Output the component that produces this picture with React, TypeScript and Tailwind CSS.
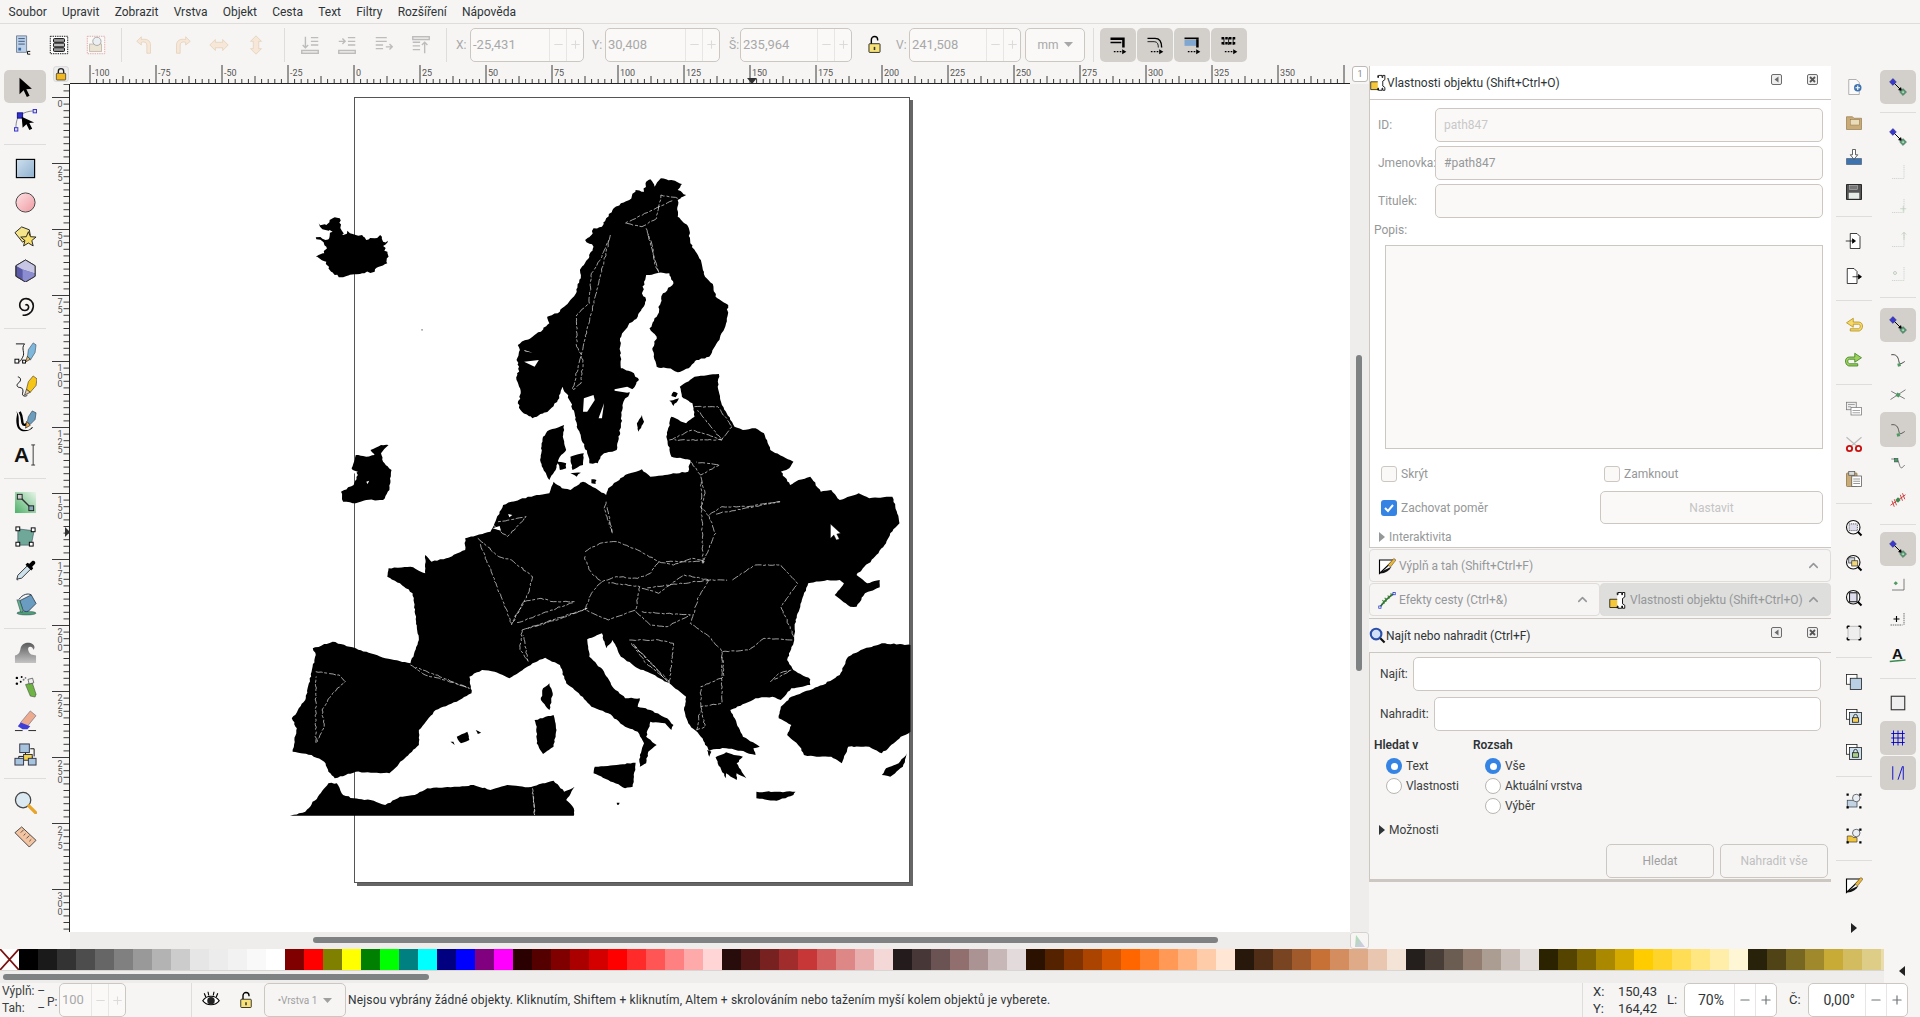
import type { ReactNode } from 'react';
import { ChevronUp, Minus, Plus } from 'lucide-react';

const FONT = "font-['Roboto','Noto_Sans',sans-serif]";

const menus = ['Soubor', 'Upravit', 'Zobrazit', 'Vrstva', 'Objekt', 'Cesta', 'Text', 'Filtry', 'Rozšíření', 'Nápověda'];

const swatches = [
  '#000000', '#1a1a1a', '#333333', '#4d4d4d', '#666666', '#808080', '#999999', '#b3b3b3', '#cccccc', '#e6e6e6', '#ececec', '#f2f2f2', '#f9f9f9', '#ffffff',
  '#800000', '#ff0000', '#808000', '#ffff00', '#008000', '#00ff00', '#008080', '#00ffff', '#000080', '#0000ff', '#800080', '#ff00ff',
  '#2b0000', '#550000', '#800000', '#aa0000', '#d40000', '#ff0000', '#ff2a2a', '#ff5555', '#ff8080', '#ffaaaa', '#ffd5d5',
  '#280b0b', '#501616', '#782121', '#a02c2c', '#c83737', '#d35f5f', '#de8787', '#e9afaf', '#f4d7d7',
  '#241c1c', '#483737', '#6c5353', '#916f6f', '#ac9393', '#c8b7b7', '#e3dbdb',
  '#2b1100', '#552200', '#803300', '#aa4400', '#d45500', '#ff6600', '#ff7f2a', '#ff9955', '#ffb380', '#ffccaa', '#ffe6d5',
  '#28170b', '#502d16', '#784421', '#a05a2c', '#c87137', '#d38d5f', '#deaa87', '#e9c6af', '#f4e3d7',
  '#241f1c', '#483e37', '#6c5d53', '#917c6f', '#ac9d93', '#c8beb7', '#e3dedb',
  '#2b2200', '#554400', '#806600', '#aa8800', '#d4aa00', '#ffcc00', '#ffd42a', '#ffdd55', '#ffe680', '#ffeeaa', '#fff6d5',
  '#28220b', '#504416', '#786721', '#a0892c', '#c8ab37', '#d3bc5f', '#decd87', '#e9ddaf',
];

// map outlines, traced in the crop's coordinates and scaled back by the group transform
const mainland =
  '950,680 985,650 1043,642 1040,680 1050,735 1080,800 1100,810 1130,805 1150,820 1165,870 1220,905 1210,925 1190,935 1212,975 1232,960 1260,950 1285,995 1310,990 1330,1020 1375,1000 1400,1015 1455,1010 1462,1040 1472,1090 1450,1120 1440,1150 1410,1195 1385,1225 1370,1245 1395,1270 1425,1260 1425,1282 1390,1300 1370,1340 1355,1340 1318,1305 1340,1270 1330,1260 1300,1260 1255,1270 1240,1320 1225,1380 1222,1440 1205,1500 1220,1530 1260,1558 1260,1575 1215,1585 1190,1620 1170,1610 1130,1615 1070,1650 1085,1690 1100,1730 1140,1760 1125,1765 1130,1785 1095,1772 1060,1765 1030,1768 1020,1772 1000,1730 970,1690 960,1650 965,1610 925,1570 880,1540 850,1525 810,1490 790,1440 775,1465 765,1420 730,1438 735,1490 770,1535 790,1580 820,1615 855,1615 850,1640 880,1650 920,1675 935,1695 930,1710 915,1690 880,1685 870,1730 895,1755 875,1775 870,1810 855,1820 855,1785 865,1750 850,1715 820,1700 780,1660 740,1640 710,1600 680,1570 665,1515 630,1493 600,1510 570,1535 545,1555 510,1535 480,1530 450,1550 455,1600 420,1625 370,1650 330,1710 330,1755 300,1790 260,1840 180,1835 130,1855 115,1835 105,1805 75,1785 30,1775 40,1705 28,1675 60,1620 75,1535 85,1485 78,1465 125,1445 180,1465 250,1495 310,1510 330,1440 315,1300 285,1270 255,1250 258,1225 310,1220 345,1240 345,1185 360,1205 395,1195 440,1170 440,1135 500,1115 530,1035 550,1025 610,1005 640,1000 650,965 670,985 690,990 720,965 750,985 775,1005 780,985 820,945 860,928 880,950 970,935 975,900 930,890 918,830 930,770 965,790 985,770 980,730 955,710';

const scandinavia =
  '565,730 572,700 562,660 568,620 562,600 570,570 565,555 600,530 620,515 640,490 635,470 660,460 680,435 690,420 705,395 715,345 715,325 735,290 745,260 725,240 740,225 745,205 765,200 775,175 790,150 810,130 830,120 845,90 865,95 870,65 880,58 890,80 905,55 930,60 955,72 945,90 965,105 945,120 945,170 970,200 975,250 1000,300 1010,350 1030,380 1035,410 1065,435 1060,490 1040,545 1020,590 990,600 975,620 945,637 920,625 895,620 885,570 895,530 878,505 895,470 910,400 935,370 925,340 895,340 870,345 860,400 870,420 850,470 830,490 820,510 808,535 810,580 810,625 835,635 853,660 835,690 815,730 810,790 800,870 770,880 755,910 735,910 730,880 705,800 700,760 690,725 680,700 672,680 660,720 640,750 600,775 575,755';

const islands = [
  '85,232 108,240 128,232 135,222 150,225 160,212 180,225 195,225 205,240 225,235 238,225 245,245 256,242 245,258 258,290 255,310 235,320 225,335 190,342 150,352 130,345 115,325 110,305 85,290 105,280 110,260',
  '92,190 110,195 118,180 130,172 142,175 147,212 150,240 120,250 118,228 125,215 108,210 95,200',
  '180,885 205,890 225,885 215,870 240,855 258,855 240,880 245,905 265,930 260,990 245,1020 205,1020 180,1030 150,1025 145,995 175,975 185,945 170,925',
  '675,795 672,830 680,870 665,890 655,930 640,960 625,925 618,900 625,830 640,810',
  '660,905 680,910 680,925 665,930',
  '690,890 722,880 720,915 695,930',
  '690,940 715,938 705,950',
  '935,695 945,700 940,712 930,708',
  '925,722 948,715 935,738',
  '860,765 865,785 852,815 848,790',
  '740,958 752,960 750,972 740,970',
  // turkey
  '1500,1455 1430,1450 1380,1470 1350,1490 1330,1545 1290,1575 1215,1610 1190,1640 1185,1675 1215,1695 1205,1725 1235,1760 1245,1785 1275,1790 1310,1790 1335,1810 1350,1760 1400,1760 1430,1780 1475,1730 1500,1715',
  // north africa
  '18,1970 60,1955 90,1910 115,1870 135,1870 150,1905 175,1915 215,1920 250,1935 285,1910 320,1905 350,1885 420,1880 460,1875 500,1890 540,1875 590,1882 650,1862 675,1895 700,1880 680,1920 698,1945 698,1970',
  // mediterranean islands and peloponnese
  '640,1570 648,1600 640,1650 620,1620 625,1585',
  '605,1680 650,1665 657,1710 650,1760 625,1782 610,1750 610,1700',
  '748,1820 800,1815 845,1808 838,1880 820,1885 780,1860 745,1840',
  '1132,1895 1225,1895 1220,1905 1180,1922 1132,1915',
  '1490,1780 1480,1820 1450,1850 1430,1845 1440,1825 1470,1810',
  '420,1730 445,1715 450,1740 430,1750',
  '465,1710 478,1718 470,1722',
  '405,1745 412,1745 415,1755',
  '1015,1770 1025,1775 1020,1790',
  '1035,1792 1060,1777 1100,1790 1085,1810 1108,1855 1085,1840 1085,1860 1060,1840 1060,1855 1040,1810',
];

const whiteCuts = [
  '720,755 722,715 745,705 748,720 730,755',
  '757,775 770,730 765,775',
  '795,688 825,680 845,692 825,698 795,692',
  '580,570 600,578 582,574',
  '580,605 615,600 605,620',
  '542,1062 552,1065 545,1072',
  '205,965 212,962 208,972',
  '172,930 185,935 178,942',
  '505,1105 522,1098 525,1112',
  '325,1205 338,1208 335,1218',
  '1095,1670 1105,1660 1110,1670',
];

const borders = [
  '945,115 905,105 895,175 860,200 820,190',
  '870,205 885,260 890,310 900,338',
  '785,225 765,290 740,340 735,430 705,465 705,560 720,600 715,670 695,690',
  '775,1025 770,1045 790,1120',
  '1000,950 1010,1000 1000,1040 1020,1070 1035,1120 1020,1165 1005,1210',
  '1020,1065 1050,1040 1110,1040 1190,1025',
  '985,740 1040,740 1075,800 1050,840',
  '925,840 980,810 1050,840',
  '975,905 1000,945 1045,915',
  '725,1175 760,1150 800,1145 850,1170 900,1205 880,1240 850,1255 800,1250 765,1265 740,1240 725,1200',
  '900,1205 935,1215 980,1195 1010,1205',
  '860,1285 900,1300 960,1245 1020,1260',
  '765,1265 740,1300 725,1350 780,1380 845,1350 855,1280',
  '1075,1260 1130,1215 1190,1215 1230,1270 1190,1340 1225,1440 1150,1435 1115,1470 1050,1475 1020,1430 975,1390 995,1310 1020,1260',
  '845,1355 880,1395 920,1400 975,1365',
  '85,1535 140,1545 155,1565 125,1600 100,1650 105,1700 85,1750',
  '310,1515 345,1545 390,1560 450,1585',
  '470,1135 520,1190 550,1200 600,1250 590,1300 550,1390',
  '550,1395 580,1325 620,1315 650,1325 700,1325',
  '575,1410 630,1390 680,1370 730,1345',
  '575,1410 570,1470 590,1505',
  '830,1440 900,1440 935,1450 925,1570',
  '1050,1475 1055,1550 1000,1580 1000,1640 1050,1630 1050,1560',
  '1165,1565 1185,1540 1215,1530',
  '1000,1640 1010,1700 990,1710',
  '500,1090 540,1130 585,1070',
  '600,1885 605,1965',
  '835,1450 870,1510 925,1565',
];

// breaks the straight traced edges up so the coast reads as a coast
function roughen(points: string, amp: number, seed = 1) {
  const pts = points.split(' ').map((p) => p.split(',').map(Number));
  const out: string[] = [];
  let n = seed;
  const noise = () => {
    n += 1;
    const v = Math.sin(n * 12.9898) * 43758.5453;
    return v - Math.floor(v) - 0.5;
  };
  pts.forEach((a, i) => {
    const b = pts[(i + 1) % pts.length];
    const len = Math.hypot(b[0] - a[0], b[1] - a[1]);
    const steps = Math.max(1, Math.round(len / 7));
    for (let s = 0; s < steps; s++) {
      const t = s / steps;
      const x = a[0] + (b[0] - a[0]) * t + (s ? noise() * amp : 0);
      const y = a[1] + (b[1] - a[1]) * t + (s ? noise() * amp : 0);
      out.push(`${Math.min(x, 1498).toFixed(1)},${Math.min(y, 1967).toFixed(1)}`);
    }
  });
  return out.join(' ');
}

function Icon({ s = 22, children }: { s?: number; children: ReactNode }) {
  return (
    <svg width={s} height={s} viewBox="0 0 24 24" className="shrink-0">
      {children}
    </svg>
  );
}

// left toolbox
const toolIcons: Record<string, ReactNode> = {
  select: <path d="M6 2v18l4.500-4.500 3.500 7.500 3-1.500-3.500-7 6-.5z" fill="#000" />,
  node: (
    <>
      <path d="M2 20C2 12 4 8 7 6 10 4 15 2 21 2" fill="none" stroke="#667" strokeWidth=".8" />
      <rect x="0.500" y="19.500" width="3.500" height="3.500" fill="#dde" stroke="#33c" />
      <rect x="20" y="0.500" width="3.500" height="3.500" fill="#dde" stroke="#33c" />
      <rect x="3.500" y="4" width="5.500" height="5.500" fill="#33c" stroke="#118" />
      <path d="M8 8l13 6-5 .5 3 6-3 1.500-3-6-4 3.500z" fill="#000" />
    </>
  ),
  rect: (
    <>
      <defs>
        <linearGradient id="rectG" x1="0" y1="0" x2="1" y2="1">
          <stop offset="0" stopColor="#cfe0ef" />
          <stop offset="1" stopColor="#8eb0cf" />
        </linearGradient>
      </defs>
      <rect x="2.500" y="2.500" width="19" height="19" fill="url(#rectG)" stroke="#000" strokeWidth="1.200" />
    </>
  ),
  circle: (
    <>
      <defs>
        <linearGradient id="circG" x1="0" y1="0" x2="1" y2="1">
          <stop offset="0" stopColor="#ffe2e4" />
          <stop offset="1" stopColor="#ee9aa2" />
        </linearGradient>
      </defs>
      <circle cx="12" cy="12" r="10" fill="url(#circG)" stroke="#444" strokeWidth="1" />
    </>
  ),
  star: (
    <>
      <path d="M1 8l7-6 8 3 1 6-8 7z" fill="#f5e58a" stroke="#222" />
      <path d="M15 7l2.200 5.200 5.800.4-4.400 3.600 1.400 5.600-5-3-5 3 1.400-5.600L7 12.600l5.800-.4z" fill="#f7df6a" stroke="#222" />
    </>
  ),
  box: (
    <>
      <path d="M12 1l10 6v11l-10 6-10-6V7z" fill="#5a5aa8" stroke="#333" />
      <path d="M12 1l10 6v8L9 11 2 7z" fill="#c6c6e4" />
      <path d="M9 11l13 4v3l-10 6-3-2z" fill="#8c8cd0" />
      <path d="M12 1l10 6v11l-10 6-10-6V7z" fill="none" stroke="#333" />
    </>
  ),
  spiral: <path d="M12 13c1-2 4 0 3 3s-6 3-8 0-1-9 4-10 10 3 9 9-7 9-11 8" fill="none" stroke="#111" strokeWidth="1.700" />,
  pen: (
    <>
      <path d="M2 3h9C7 8 12 12 9 17s-2 4-4 4" fill="none" stroke="#111" />
      <rect x="1" y="19" width="4" height="4" fill="#fff" stroke="#000" />
      <rect x="9" y="20" width="3" height="3" fill="#fff" stroke="#000" />
      <path d="M15 9l5-7 3 2-1 8-5 8-3-3z" fill="#7db8dc" stroke="#345" strokeWidth=".6" />
      <path d="M14 16l3 3-5 3z" fill="#e8b86a" stroke="#222" strokeWidth=".7" />
    </>
  ),
  pencil: (
    <>
      <path d="M4 2c3 0 4 4 1 6s-2 5 1 5 4 3 3 6 3 4 5 2" fill="none" stroke="#111" />
      <path d="M15 7l5-6 4 3-1 7-6 7-4-3z" fill="#f5c518" stroke="#543" strokeWidth=".7" />
      <path d="M13 15l4 3-6 3z" fill="#e9cfa6" stroke="#222" strokeWidth=".7" />
    </>
  ),
  calli: (
    <>
      <path d="M2 2c3 3 3 6 3 10s0 10 7 10 4-3 8-3c-4 5-15 7-17-2S5 6 2 2z" fill="#000" />
      <path d="M6 3c3 5 2 9 3 12s4 1 5 0" fill="none" stroke="#000" strokeWidth="2.500" />
      <path d="M15 8l4-6 4 2-1 7-5 5-3-3z" fill="#6d9dbd" stroke="#234" strokeWidth=".6" />
      <path d="M13 13l4 4-5 3z" fill="#eaa94a" stroke="#222" strokeWidth=".7" />
    </>
  ),
  text: (
    <>
      <text x="0" y="20" fontSize="22" fontWeight="900" fontFamily="Liberation Sans, sans-serif" fill="#111">
        A
      </text>
      <path d="M20 2v21M18 2h4M18 23h4" stroke="#222" strokeWidth=".9" fill="none" />
    </>
  ),
  gradient: (
    <>
      <defs>
        <linearGradient id="gradG" x1="0" y1="1" x2="1" y2="0">
          <stop offset="0" stopColor="#4fb069" />
          <stop offset="1" stopColor="#e8f5ea" />
        </linearGradient>
      </defs>
      <rect x="1" y="1" width="22" height="22" fill="url(#gradG)" />
      <path d="M6 6l12 12" stroke="#333" strokeWidth="1.400" />
      <rect x="3.500" y="3.500" width="5" height="5" fill="#ccc" stroke="#222" />
      <rect x="15.500" y="15.500" width="5" height="5" fill="#8ab" stroke="#222" />
    </>
  ),
  mesh: (
    <>
      <path d="M4 4l17 2-3 15-14 0z" fill="#6fa799" />
      <path d="M4 4l17 2-3 15-14 0z" fill="none" stroke="#234" strokeWidth=".5" />
      <rect x="2" y="2" width="4" height="4" fill="#fff" stroke="#000" />
      <rect x="18" y="3" width="4" height="4" fill="#fff" stroke="#000" />
      <rect x="2" y="18" width="4" height="4" fill="#fff" stroke="#000" />
      <rect x="16" y="18" width="4" height="4" fill="#fff" stroke="#000" />
    </>
  ),
  dropper: (
    <>
      <path d="M3 21l1-4L14 7l4 3L8 20z" fill="#cfe3ee" stroke="#333" />
      <path d="M14 4l2 1 3-3c2-1 4 1 3 3l-3 3 1 2-2 2-6-6z" fill="#000" />
      <path d="M3.500 19l-1 3 2 .5z" fill="#556" />
    </>
  ),
  bucket: (
    <>
      <ellipse cx="13" cy="21" rx="10" ry="2" fill="#4f9c78" stroke="#234" strokeWidth=".4" />
      <path d="M6 8l12-6 5 9-8 8c-3 1-5 0-6-2z" fill="#6a9cc2" stroke="#234" strokeWidth=".8" />
      <path d="M3 7l3 1 3 9 0 3-2 0z" fill="#64b28a" stroke="#234" strokeWidth=".5" />
      <path d="M5 7C9 1 15 0 18 2" fill="none" stroke="#234" />
    </>
  ),
  tweak: (
    <>
      <defs>
        <linearGradient id="twkG" x1="0" y1="0" x2="0" y2="1">
          <stop offset="0" stopColor="#5a5a5a" />
          <stop offset="1" stopColor="#c4c4c4" />
        </linearGradient>
      </defs>
      <path d="M1 23v-8c5-1 5-4 6-8s6-6 10-5 6 5 3 7c0-3-4-4-5-2s1 6 3 7l5 1v8z" fill="url(#twkG)" />
    </>
  ),
  spray: (
    <>
      <path d="M12 10l7-2 4 12-1 3-5-1z" fill="#6fb344" stroke="#333" strokeWidth=".5" />
      <rect x="15" y="4" width="5" height="5" transform="rotate(-15 17 6)" fill="#eee" stroke="#333" strokeWidth=".6" />
      <circle cx="3" cy="3" r="1.300" />
      <circle cx="8" cy="2" r="1" />
      <circle cx="3" cy="9" r="1.300" />
      <circle cx="7" cy="7" r="1" />
      <circle cx="10" cy="5" r="1" fill="#777" />
      <circle cx="12" cy="3" r=".9" fill="#777" />
    </>
  ),
  eraser: (
    <>
      <path d="M7 14L17 2l6 5-9 11-4-1z" fill="#ecaa8e" stroke="#4b4b66" strokeWidth=".5" />
      <path d="M7 14l10 4-3 3H9l-5-3z" fill="#3f3fd8" />
      <path d="M1 22.500h8M15 22.500h8" stroke="#222" strokeWidth="1" />
    </>
  ),
  connector: (
    <>
      <path d="M12 8V17M5 18v-4h14v4M17 6h4v8" fill="none" stroke="#111" strokeWidth="1" />
      <rect x="6" y="1" width="10" height="9" fill="#a7c4de" stroke="#334" />
      <rect x="10" y="12" width="9" height="6" fill="#f5d24c" stroke="#334" />
      <rect x="1" y="16" width="9" height="7" fill="#a7c4de" stroke="#334" />
      <rect x="15" y="16" width="8" height="7" fill="#a7c4de" stroke="#334" />
    </>
  ),
  zoom: (
    <>
      <circle cx="9.500" cy="9.500" r="8" fill="#dbe9f2" stroke="#444" strokeWidth="1.300" />
      <path d="M15.500 15.500l7 7" stroke="#e9a529" strokeWidth="3.500" strokeLinecap="round" />
    </>
  ),
  measure: (
    <>
      <path d="M8 2l15 14-7 7L1 8z" fill="#f2c4a2" stroke="#222" strokeWidth=".8" />
      <path d="M7 8l3-3M10 11l2-2M13 14l3-3M16 17l2-2" stroke="#333" strokeWidth=".8" />
    </>
  ),
};

const toolRows = [
  ['select', 'node'],
  ['rect', 'circle', 'star', 'box', 'spiral'],
  ['pen', 'pencil', 'calli', 'text'],
  ['gradient', 'mesh', 'dropper', 'bucket'],
  ['tweak', 'spray', 'eraser', 'connector'],
  ['zoom', 'measure'],
];

function LeftToolbox() {
  return (
    <div className="w-[50px] shrink-0 flex flex-col items-center pt-[5px]">
      {toolRows.map((group, g) => (
        <div key={g} className="w-[42px] flex flex-col">
          {g > 0 && (
            <div className="h-[14px] flex items-center">
              <div className="w-full h-px bg-[#dedddb]" />
            </div>
          )}
          {group.map((name) => (
            <div
              key={name}
              className={`flex items-center justify-center rounded-[5px] ${name === 'select' ? 'h-[33px] bg-[#d3d0cc]' : 'h-[34px]'}`}
            >
              <Icon s={name === 'select' ? 22 : 23}>{toolIcons[name]}</Icon>
            </div>
          ))}
        </div>
      ))}
    </div>
  );
}

// rulers
function HRuler() {
  const ticks = [];
  for (let i = -40; i <= 150; i++) {
    const x = 354 + i * 6.6;
    if (x < 70 || x > 1350) continue;
    const major = i % 10 === 0;
    const mid = i % 5 === 0;
    ticks.push(<line key={i} x1={x} x2={x} y1={major ? 65 : mid ? 76 : 79} y2={83} stroke="#3a3a3a" strokeWidth="1" />);
    if (major && x < 1330)
      ticks.push(
        <text key={`t${i}`} x={x + 2} y={76} fontSize="9" fill="#555" fontFamily="Roboto, sans-serif">
          {i * 2.5}
        </text>,
      );
  }
  return (
    <svg width="1280" height="19" viewBox="70 65 1280 19" className="shrink-0">
      {ticks}
      <line x1="70" x2="1350" y1="83.500" y2="83.500" stroke="#222" />
      <path d="M747 78h10l-5 6z" fill="#333" />
    </svg>
  );
}

function VRuler() {
  const ticks = [];
  for (let i = -2; i <= 130; i++) {
    const y = 97.5 + i * 6.6;
    if (y < 84 || y > 932) continue;
    const major = i % 10 === 0;
    ticks.push(<line key={i} x1={major ? 52 : 63.5} x2={70} y1={y} y2={y} stroke="#3a3a3a" strokeWidth="1" />);
    if (major)
      String(i * 2.5)
        .split('')
        .forEach((d, n) => {
          ticks.push(
            <text key={`t${i}-${n}`} x={57.5} y={y + 9 + n * 8} fontSize="9" fill="#555" fontFamily="Roboto, sans-serif">
              {d}
            </text>,
          );
        });
  }
  return (
    <svg width="20" height="848" viewBox="50 84 20 848" className="shrink-0">
      {ticks}
      <line x1="69.500" x2="69.500" y1="84" y2="932" stroke="#222" />
      <path d="M65 527v10l5-5z" fill="#333" />
    </svg>
  );
}

function EuropeCanvas() {
  return (
    <div className="w-[1280px] h-[848px] bg-white shrink-0">
      <svg width="1280" height="848" viewBox="70 84 1280 848" className="block">
        {/* page with its shadow */}
        <rect x="357" y="100" width="556" height="786" fill="#666" />
        <rect x="354.500" y="97.500" width="555" height="785" fill="#fff" stroke="#555" />
        <g transform="translate(280 160) scale(0.42085 0.33333)">
          <polygon points={roughen(mainland, 3, 3)} fill="#000" />
          <polygon points={roughen(scandinavia, 5, 7)} fill="#000" />
          {islands.map((p, i) => (
            <polygon key={i} points={roughen(p, i < 2 ? 8 : 3, i * 11)} fill="#000" />
          ))}
          {whiteCuts.map((p, i) => (
            <polygon key={i} points={p} fill="#fff" />
          ))}
          {borders.map((p, i) => (
            <polyline
              key={i}
              points={roughen(p, 3, i * 5).split(' ').slice(0, -1).join(' ')}
              fill="none"
              stroke="#fff"
              strokeWidth="0.7"
              strokeDasharray="7 1.500 3 2"
              opacity="0.9"
              vectorEffect="non-scaling-stroke"
            />
          ))}
          <rect x="336" y="507" width="3" height="5" fill="#888" />
          <polygon points="800,1928 807,1928 805,1934 801,1934" fill="#000" />
          <polygon
            points="1308,1092 1308,1135 1316,1125 1322,1140 1329,1137 1323,1122 1332,1120"
            fill="#fff"
            stroke="#000"
            strokeWidth="1"
          />
        </g>
      </svg>
    </div>
  );
}

// form bits
function Spin({
  w,
  value,
  dim = true,
  big = false,
}: {
  w: string;
  value: string;
  dim?: boolean;
  big?: boolean;
}) {
  const btn = big ? 'w-[21px]' : 'w-[17px]';
  return (
    <div className={`${w} h-[34px] shrink-0 flex items-center rounded-[5px] border border-[#cdc7c2] ${dim ? 'bg-[#faf9f8]' : 'bg-white'}`}>
      <span className={`flex-1 ${big ? 'text-[14px] text-right pr-[10px]' : 'text-[13px] pl-[2px]'} ${dim ? 'text-[#a8a8a8]' : 'text-[#2e3436]'}`}>
        {value}
      </span>
      <span className={`${btn} h-full border-l border-[#e8e6e4] flex items-center justify-center`}>
        <Minus size={big ? 14 : 13} strokeWidth={2} className={dim ? 'text-[#dcdbd9]' : 'text-[#6f7476]'} />
      </span>
      <span className={`${btn} h-full border-l border-[#e8e6e4] flex items-center justify-center`}>
        <Plus size={big ? 14 : 13} strokeWidth={2} className={dim ? 'text-[#dcdbd9]' : 'text-[#6f7476]'} />
      </span>
    </div>
  );
}

function Field({ label, value, muted }: { label: string; value?: string; muted?: boolean }) {
  return (
    <div className="flex items-center h-[34px]">
      <span className="w-[57px] shrink-0 text-[12px] text-[#959898]">{label}</span>
      <div className="flex-1 h-full rounded-[5px] border border-[#cdc7c2] bg-[#faf9f8] flex items-center pl-[8px]">
        <span className={`text-[12px] ${muted ? 'text-[#c8c8c8]' : 'text-[#959898]'}`}>{value}</span>
      </div>
    </div>
  );
}

function Check({ on }: { on?: boolean }) {
  return on ? (
    <span className="w-[16px] h-[16px] rounded-[3px] bg-[#3584e4] flex items-center justify-center shrink-0">
      <svg width="12" height="12" viewBox="0 0 12 12">
        <path d="M2 6l3 3 5-6" fill="none" stroke="#fff" strokeWidth="2" />
      </svg>
    </span>
  ) : (
    <span className="w-[16px] h-[16px] rounded-[3px] border border-[#cdc7c2] bg-[#faf9f8] shrink-0" />
  );
}

function Radio({ on, label }: { on?: boolean; label: string }) {
  return (
    <div className="h-[20px] flex items-center gap-[4px]">
      {on ? (
        <span className="w-[16px] h-[16px] rounded-full bg-[#3584e4] flex items-center justify-center shrink-0">
          <span className="w-[7px] h-[7px] rounded-full bg-white" />
        </span>
      ) : (
        <span className="w-[16px] h-[16px] rounded-full border border-[#b9b5b0] bg-white shrink-0" />
      )}
      <span className="text-[12px] tracking-[-0.1px] text-[#3b3f41]">{label}</span>
    </div>
  );
}

function Expander({ label, dim }: { label: string; dim?: boolean }) {
  return (
    <div className="h-[18px] flex items-center pl-[9px] gap-[4px]">
      <svg width="6" height="10" viewBox="0 0 6 10">
        <path d="M0 0l6 5-6 5z" fill={dim ? '#959898' : '#2e3436'} />
      </svg>
      <span className={`text-[12px] ${dim ? 'text-[#959898]' : 'text-[#3b3f41]'}`}>{label}</span>
    </div>
  );
}

function DialogButtons() {
  return (
    <div className="flex items-center gap-[25px] -mt-[6px]">
      <svg width="11" height="11" viewBox="0 0 11 11">
        <rect x=".5" y=".5" width="10" height="10" rx="1.500" fill="#eee" stroke="#6c6c6c" />
        <path d="M7.500 2.500v6l-4-3z" fill="#6c6c6c" />
      </svg>
      <svg width="11" height="11" viewBox="0 0 11 11">
        <rect x=".5" y=".5" width="10" height="10" rx="1.500" fill="#eee" stroke="#6c6c6c" />
        <path d="M3 3l5 5M8 3l-5 5" stroke="#555" strokeWidth="1.800" />
      </svg>
    </div>
  );
}

const WrenchFolder = ({ s = 17 }: { s?: number }) => (
  <Icon s={s}>
    <path d="M1 11h10l2 2v9H1z" fill="#f5c83c" stroke="#000" strokeWidth="1" />
    <path d="M11 2v3h1V2h5v3h1V2h3v6l-3 2v7l3 2v4h-3v-3h-1v3h-5v-3h-1v3" fill="#fff" stroke="#000" strokeWidth="1.200" />
  </Icon>
);

const fillStrokeGlyph = (
  <>
    <path d="M2 4h19L2 22z" fill="#fff" stroke="#000" strokeWidth="1.500" />
    <path d="M3 22c7 0 12-4 15-9L3 20z" fill="#111" />
    <path d="M21 2l3 2-7 9-4-2z" fill="#e9b73c" stroke="#432" strokeWidth=".6" />
  </>
);

const Lpe = () => (
  <Icon s={18}>
    <path d="M3 21C8 14 14 8 22 3" fill="none" stroke="#2a6f2a" strokeWidth="2" />
    <path d="M6 12l2 3M9 9l2 3M13 6l2 3M17 3l1 3M5 17l4-1M8 14l4-1M12 10l4-1" stroke="#3c803c" strokeWidth="1.500" />
    <rect x="1" y="20" width="3" height="3" fill="#fff" stroke="#23c" />
    <rect x="20" y="2" width="3" height="3" fill="#fff" stroke="#23c" />
  </Icon>
);

function TabRow({ icon, label, active, w }: { icon: ReactNode; label: string; active?: boolean; w: string }) {
  return (
    <div className={`${w} h-full flex items-center rounded-[4px] pl-[8px] pr-[9px] gap-[2px] border border-[#dfdcd9] ${active ? 'bg-[#dededc]' : 'bg-[#f6f5f4]'}`}>
      {icon}
      <span className="flex-1 min-w-0 pl-[1px] text-[12px] text-[#95989a] whitespace-nowrap">{label}</span>
      <ChevronUp size={15} strokeWidth={2.500} className="text-[#95989a] shrink-0" />
    </div>
  );
}

function ObjectPanel() {
  return (
    <div className="bg-white border-l border-b border-[#cdc7c2]">
      <div className="h-[34px] flex items-center border-b border-[#cdc7c2] pr-[13px]">
        <WrenchFolder />
        <span className="flex-1 text-[12px] text-[#2e3436] whitespace-nowrap">Vlastnosti objektu (Shift+Ctrl+O)</span>
        <DialogButtons />
      </div>
      <div className="h-[447px] flex flex-col pt-[8px] px-[8px]">
        <div className="flex flex-col gap-[4px]">
          <Field label="ID:" value="path847" muted />
          <Field label="Jmenovka:" value="#path847" />
          <Field label="Titulek:" />
        </div>
        <div className="h-[24px] flex items-center -ml-[4px] text-[12px] text-[#959898]">Popis:</div>
        <div className="mt-[3px] ml-[7px] h-[204px] bg-[#faf9f8] border border-[#cdc7c2]" />
        <div className="mt-[16px] h-[18px] flex items-center ml-[3px]">
          <div className="w-[223px] flex items-center gap-[4px]">
            <Check />
            <span className="text-[12px] text-[#959898]">Skrýt</span>
          </div>
          <div className="flex items-center gap-[4px]">
            <Check />
            <span className="text-[12px] text-[#959898]">Zamknout</span>
          </div>
        </div>
        <div className="mt-[8px] h-[33px] flex items-center ml-[3px]">
          <div className="w-[219px] flex items-center gap-[4px]">
            <Check on />
            <span className="text-[12px] text-[#959898]">Zachovat poměr</span>
          </div>
          <div className="flex-1 h-full rounded-[5px] border border-[#cdc7c2] bg-[#faf9f8] flex items-center justify-center text-[12px] text-[#c4c4c4]">
            Nastavit
          </div>
        </div>
        <div className="mt-[4px] -ml-[8px]">
          <Expander label="Interaktivita" dim />
        </div>
      </div>
    </div>
  );
}

function FindPanel() {
  return (
    <div className="border-t border-[#cdc7c2] mt-[2px]">
      <div className="h-[34px] flex items-center border-b border-[#cdc7c2] pr-[13px]">
        <Icon s={17}>
          <circle cx="10" cy="10" r="7.500" fill="#cfe0f7" stroke="#2a4fa8" strokeWidth="3" />
          <path d="M16 16l6 6" stroke="#111" strokeWidth="3" />
        </Icon>
        <span className="flex-1 text-[12px] text-[#2e3436]">Najít nebo nahradit (Ctrl+F)</span>
        <DialogButtons />
      </div>
      <div className="h-[229px] border-l border-[#cdc7c2] border-b-[3px] border-b-[#cdc7c2] pt-[4px] flex flex-col">
        <div className="h-[34px] flex items-center pl-[10px] pr-[10px]">
          <span className="w-[33px] shrink-0 text-[12px] text-[#3b3f41]">Najít:</span>
          <div className="flex-1 h-full rounded-[5px] border border-[#cdc7c2] bg-white" />
        </div>
        <div className="mt-[6px] h-[34px] flex items-center pl-[10px] pr-[10px]">
          <span className="w-[54px] shrink-0 text-[12px] text-[#3b3f41]">Nahradit:</span>
          <div className="flex-1 h-full rounded-[5px] border border-[#cdc7c2] bg-white" />
        </div>
        <div className="flex mt-[5px] pl-[4px]">
          <div className="w-[99px]">
            <div className="h-[18px] flex items-center text-[12px] font-semibold text-[#2e3436]">Hledat v</div>
            <div className="pl-[12px] pt-[2px]">
              <Radio on label="Text" />
              <Radio label="Vlastnosti" />
            </div>
          </div>
          <div>
            <div className="h-[18px] flex items-center text-[12px] font-semibold text-[#2e3436]">Rozsah</div>
            <div className="pl-[12px] pt-[2px]">
              <Radio on label="Vše" />
              <Radio label="Aktuální vrstva" />
              <Radio label="Výběr" />
            </div>
          </div>
        </div>
        <div className="mt-[5px]">
          <Expander label="Možnosti" />
        </div>
        <div className="mt-[5px] flex justify-end gap-[6px] pr-[3px]">
          <div className="w-[108px] h-[34px] rounded-[5px] border border-[#cdc7c2] bg-[#f6f5f4] flex items-center justify-center text-[12px] text-[#a0a0a0]">
            Hledat
          </div>
          <div className="w-[108px] h-[34px] rounded-[5px] border border-[#cdc7c2] bg-[#f6f5f4] flex items-center justify-center text-[12px] text-[#c0c0c0]">
            Nahradit vše
          </div>
        </div>
      </div>
    </div>
  );
}

function DockPanel() {
  return (
    <div className="w-[462px] shrink-0 pt-px flex flex-col">
      <ObjectPanel />
      <div className="h-[34px] pt-px">
        <TabRow icon={<Icon s={18}>{fillStrokeGlyph}</Icon>} label="Výplň a tah (Shift+Ctrl+F)" w="w-full" />
      </div>
      <div className="h-[34px] pt-px flex">
        <TabRow icon={<Lpe />} label="Efekty cesty (Ctrl+&)" w="w-[231px]" />
        <TabRow icon={<WrenchFolder s={18} />} label="Vlastnosti objektu (Shift+Ctrl+O)" active w="w-[231px]" />
      </div>
      <FindPanel />
    </div>
  );
}

// right command bar
const doc = 'M5 2h10l4 4v16H5z';
const cmdGroups: ReactNode[][] = [
  [
    <>
      <path d={doc} fill="#fafafa" stroke="#999" />
      <circle cx="17" cy="13" r="5" fill="#3f73b0" />
      <path d="M14 13h6M17 10v6" stroke="#fff" strokeWidth="1.500" />
    </>,
    <>
      <path d="M2 5h8l2 2h10v15H2z" fill="#c9ab78" stroke="#9a8255" />
      <rect x="7" y="9" width="12" height="7" fill="#eadbbb" stroke="#8a7347" strokeWidth=".6" />
    </>,
    <>
      <path d="M2 14h20v8H2z" fill="#3f73b0" stroke="#234" strokeWidth=".6" />
      <path d="M10 2h4v7h3l-5 6-5-6h3z" fill="#fff" stroke="#333" />
    </>,
    <>
      <path d="M2 2h20v20H2z" fill="#555" stroke="#000" />
      <rect x="6" y="3" width="11" height="6" fill="#777" stroke="#ddd" strokeWidth=".5" />
      <rect x="5" y="13" width="14" height="8" fill="#e6ece6" />
    </>,
  ],
  [
    <>
      <path d="M7 2h9l4 4v16H7z" fill="#fff" stroke="#000" />
      <path d="M1 12h12M10 9l4 3-4 3z" stroke="#000" fill="#000" />
    </>,
    <>
      <path d="M3 2h9l4 4v16H3z" fill="#fff" stroke="#000" />
      <path d="M10 13h11M18 10l4 3-4 3z" stroke="#000" fill="#000" />
    </>,
  ],
  [
    <path d="M11 3L2 9l9 6v-4h7c3 0 3 5 0 6H7v3h12c6-2 6-12-1-12h-7z" fill="#f5d969" stroke="#b08a10" strokeWidth="1" />,
    <path d="M13 3l9 6-9 6v-4H6c-3 0-3 5 0 6h11v3H5c-6-2-6-12 1-12h7z" fill="#9ed05a" stroke="#2f7a18" strokeWidth="1" />,
  ],
  [
    <>
      <rect x="2" y="3" width="13" height="10" fill="#eee" stroke="#777" />
      <rect x="8" y="10" width="14" height="10" fill="#fff" stroke="#777" />
      <path d="M4 6h9M4 9h4M10 14h10M10 17h10" stroke="#888" />
    </>,
    <>
      <path d="M2 3l14 12M22 3L8 15" stroke="#bbb" strokeWidth="1.500" />
      <circle cx="6" cy="18" r="3.500" fill="#fff" stroke="#c11" strokeWidth="2.500" />
      <circle cx="18" cy="18" r="3.500" fill="#fff" stroke="#c11" strokeWidth="2.500" />
    </>,
    <>
      <rect x="2" y="4" width="14" height="18" rx="1" fill="#c9ab78" stroke="#8a7347" />
      <rect x="5" y="2" width="8" height="5" fill="#ddd" stroke="#555" />
      <rect x="9" y="8" width="13" height="14" fill="#fff" stroke="#555" />
      <path d="M11 12h9M11 15h9M11 18h9" stroke="#777" />
    </>,
  ],
  [
    <>
      <circle cx="11" cy="11" r="9" fill="#fff" stroke="#111" strokeWidth="1.500" />
      <rect x="5.500" y="6.500" width="11" height="9" fill="#dde" stroke="#333" strokeDasharray="1.500 1" />
      <path d="M17 17l5 5" stroke="#000" strokeWidth="2.500" />
    </>,
    <>
      <circle cx="11" cy="11" r="9" fill="#fff" stroke="#111" strokeWidth="1.500" />
      <rect x="5" y="5" width="8" height="7" fill="#cfd8e4" stroke="#333" />
      <rect x="9" y="9" width="8" height="7" fill="#f1d77a" stroke="#333" />
      <path d="M17 17l5 5" stroke="#000" strokeWidth="2.500" />
    </>,
    <>
      <circle cx="11" cy="11" r="9" fill="#fff" stroke="#111" strokeWidth="1.500" />
      <rect x="6" y="5" width="10" height="12" fill="#dde" stroke="#222" strokeWidth="1.500" />
      <path d="M17 17l5 5" stroke="#000" strokeWidth="2.500" />
    </>,
    <>
      <rect x="4" y="3" width="16" height="18" fill="#eee" stroke="#aaa" />
      <path d="M3 3h3M3 3v3M21 3h-3M21 3v3M3 21h3M3 21v-3M21 21h-3M21 21v-3" stroke="#000" strokeWidth="1.800" />
    </>,
  ],
  [
    <>
      <rect x="2" y="2" width="14" height="13" fill="#fff" stroke="#111" />
      <rect x="7" y="7" width="15" height="15" fill="#b9d0e4" stroke="#111" />
    </>,
    <>
      <rect x="2" y="2" width="14" height="13" fill="#fff" stroke="#111" />
      <rect x="6" y="6" width="16" height="16" fill="#cfe0ee" stroke="#111" />
      <rect x="10" y="13" width="8" height="6" fill="#f3cf5a" stroke="#111" />
      <path d="M11.500 13v-2a2.500 2.500 0 015 0v2" fill="none" stroke="#111" />
    </>,
    <>
      <rect x="2" y="2" width="14" height="13" fill="#fff" stroke="#111" />
      <rect x="6" y="6" width="16" height="16" fill="#cfe0ee" stroke="#111" />
      <rect x="10" y="13" width="8" height="6" fill="#a8d08a" stroke="#111" />
      <path d="M11.500 13v-2a2.500 2.500 0 015 0v2" fill="none" stroke="#111" />
    </>,
  ],
  [
    <>
      <rect x="3" y="11" width="13" height="9" fill="#c4d3e2" stroke="#345" />
      <circle cx="15" cy="8" r="5" fill="#e8eef3" stroke="#444" />
      <path d="M2 2h3v3H2zM19 2h3v3h-3zM2 19h3v3H2zM19 19h3v3h-3z" fill="#000" />
    </>,
    <>
      <path d="M3 12h6l2 2h5v6H3z" fill="#f0c63a" stroke="#543" />
      <circle cx="15" cy="8" r="5" fill="#e8eef3" stroke="#444" />
      <path d="M2 2h3v3H2zM19 2h3v3h-3zM2 19h3v3H2zM19 19h3v3h-3z" fill="#000" />
    </>,
  ],
  [fillStrokeGlyph],
];

function CommandBar() {
  return (
    <div className="w-[45px] shrink-0 pt-[4px] flex flex-col items-center">
      {cmdGroups.map((group, g) => (
        <div key={g} className="w-[36px] flex flex-col">
          {g > 0 && (
            <div className="h-[14px] flex items-center">
              <div className="w-full h-px bg-[#dedddb]" />
            </div>
          )}
          {group.map((ic, i) => (
            <div key={i} className="h-[35px] flex items-center justify-center">
              <Icon s={18}>{ic}</Icon>
            </div>
          ))}
        </div>
      ))}
      <svg width="6" height="10" viewBox="0 0 6 10" className="mt-[21px]">
        <path d="M0 0l6 5-6 5z" fill="#222" />
      </svg>
    </div>
  );
}

// snap bar
const snapMain = (
  <>
    <path d="M6 6l10 10" stroke="#000" strokeWidth="1.300" />
    <path d="M17.500 17.500l-5.500-1.500 4-4z" fill="#000" />
    <rect x="2" y="2" width="6.500" height="6.500" transform="rotate(45 5.250 5.250)" fill="#3a3ad0" stroke="#224" strokeWidth=".5" />
    <rect x="15.500" y="15.500" width="6.500" height="6.500" transform="rotate(45 18.750 18.750)" fill="#5aa070" stroke="#234" strokeWidth=".5" />
    <circle cx="18.750" cy="18.750" r="1.200" fill="#d5ead8" />
  </>
);
const corner = 'M4 22h16V4';
const dots = { fill: 'none', stroke: '#c9d4c9', strokeWidth: 1.2, strokeDasharray: '1.500 1' };

function SnapBtn({ children, active, h = 'h-[35px]' }: { children: ReactNode; active?: boolean; h?: string }) {
  return (
    <div className={`${h} flex items-center justify-center rounded-[5px] ${active ? 'bg-[#d3d0cc]' : ''}`}>
      <Icon s={18}>{children}</Icon>
    </div>
  );
}

function SnapSep({ h = 'h-[14px]' }: { h?: string }) {
  return (
    <div className={`${h} flex items-center`}>
      <div className="w-full h-px bg-[#dedddb]" />
    </div>
  );
}

function SnapBar() {
  return (
    <div className="w-[44px] shrink-0 pt-[5px] pl-[4px] pr-[4px] flex flex-col">
      <SnapBtn active h="h-[34px]">{snapMain}</SnapBtn>
      <SnapSep h="h-[16px]" />
      <SnapBtn h="h-[34px]">{snapMain}</SnapBtn>
      <SnapBtn h="h-[34px]">
        <path d={corner} {...dots} />
      </SnapBtn>
      <SnapBtn h="h-[34px]">
        <path d={corner} {...dots} />
        <path d="M15 17h8M19 13v8" stroke="#b5cdb5" />
      </SnapBtn>
      <SnapBtn h="h-[34px]">
        <path d={corner} {...dots} />
        <path d="M20 3v10M17 6l3-3 3 3" stroke="#b5cdb5" fill="none" />
      </SnapBtn>
      <SnapBtn h="h-[34px]">
        <path d={corner} {...dots} />
        <circle cx="8" cy="12" r="2" fill="none" stroke="#a9c5a9" />
      </SnapBtn>
      <SnapSep />
      <div className="h-[4px]" />
      <SnapBtn active h="h-[34px]">{snapMain}</SnapBtn>
      <SnapBtn>
        <path d="M3 5c7-1 9 3 10 8s2 5 8 1" fill="none" stroke="#111" />
        <path d="M11 17l4-1 1 4-4 1z" fill="#4f9a64" />
      </SnapBtn>
      <SnapBtn>
        <path d="M2 18L22 5M3 7l18 10" stroke="#555" fill="none" />
        <rect x="9.500" y="9.500" width="5" height="5" transform="rotate(30 12 12)" fill="#4f9a64" />
      </SnapBtn>
      <SnapBtn active>
        <path d="M3 5c7-1 9 3 10 8s2 5 8 1" fill="none" stroke="#333" />
        <path d="M10 17l4-1 1 4-4 1z" fill="#4f9a64" />
      </SnapBtn>
      <SnapBtn>
        <path d="M3 4h6c5 0 4 12 8 12l4-4" fill="none" stroke="#555" />
        <rect x="7" y="3" width="5" height="5" fill="#4f9a64" stroke="#234" strokeWidth=".5" />
      </SnapBtn>
      <SnapBtn>
        <path d="M2 19L22 5" stroke="#c33" strokeWidth="1.200" />
        <path d="M4 13l3 8M7 11l3 8M15 5l3 8M18 3l3 8" stroke="#c33" strokeWidth="1.200" />
        <rect x="9.500" y="9.500" width="5" height="5" transform="rotate(45 12 12)" fill="#3c8a50" />
      </SnapBtn>
      <SnapSep h="h-[15px]" />
      <SnapBtn active h="h-[34px]">{snapMain}</SnapBtn>
      <SnapBtn>
        <path d="M4 20h16V5" fill="none" stroke="#555" />
        <rect x="7" y="9" width="4" height="4" transform="rotate(45 9 11)" fill="#4f9a64" />
      </SnapBtn>
      <SnapBtn>
        <path d="M10 8v8M6 12h8" stroke="#000" strokeWidth="1.500" />
        <path d="M2 20h16M20 4v16" fill="none" stroke="#444" strokeDasharray="2 1" />
      </SnapBtn>
      <SnapBtn>
        <text x="4" y="18" fontSize="20" fontWeight="900" fontFamily="Liberation Sans, sans-serif" fill="#111">
          A
        </text>
        <path d="M1 22L22 20" stroke="#3c8a50" strokeWidth="2" />
      </SnapBtn>
      <SnapSep />
      <SnapBtn>
        <rect x="3" y="3" width="18" height="18" fill="#eee" stroke="#333" strokeWidth="1.500" />
      </SnapBtn>
      <div className="h-px" />
      <SnapBtn active h="h-[34px]">
        <path d="M3 6h18M3 12h18M3 18h18M6 2v20M12 2v20M18 2v20" stroke="#00c" fill="none" strokeWidth="1.200" />
      </SnapBtn>
      <div className="h-px" />
      <SnapBtn active h="h-[34px]">
        <path d="M5 3v18M12 21l6-18M19 3v18" stroke="#00c" fill="none" strokeWidth="1.200" />
      </SnapBtn>
    </div>
  );
}

// top toolbar glyphs
const selAll = (
  <>
    <path d="M6 2h11v18H6z" fill="#bcd0e8" stroke="#5a6a80" strokeWidth=".8" />
    <path d="M8 5h7M8 8h7M8 11h7" stroke="#36557a" />
    <rect x="8" y="15" width="3" height="3" fill="#3c6ca8" />
    <path d="M18 19h3M18 22h3M18 19v3" stroke="#000" />
  </>
);
const selLayers = (
  <>
    <rect x="2.500" y="2.500" width="19" height="19" fill="#fff" stroke="#000" strokeDasharray="1.500 1" />
    <rect x="6" y="5" width="12" height="4" rx="1" fill="#999" stroke="#000" />
    <rect x="6" y="10" width="12" height="4" rx="1" fill="#bbb" stroke="#000" />
    <rect x="6" y="15" width="12" height="4" rx="1" fill="#999" stroke="#000" />
  </>
);
const selTouch = (
  <g opacity=".45">
    <rect x="2.500" y="2.500" width="19" height="19" fill="#fff" stroke="#c44" strokeDasharray="1.500 1" />
    <rect x="5" y="11" width="13" height="8" fill="#e0d2b0" stroke="#875" />
    <circle cx="13" cy="8" r="4.500" fill="#dfe8ee" stroke="#444" />
  </g>
);
const rot = (d: string) => <path d={d} fill="#f6d8b8" stroke="#c9985e" strokeWidth=".7" opacity=".45" />;
const alignIcon = (y: string) => (
  <g opacity=".45">
    <path d={y} fill="none" stroke="#777" strokeWidth="1.500" />
  </g>
);

const dottedArrow = (
  <>
    <path d="M7 20h10" stroke="#000" strokeWidth="1.500" strokeDasharray="2 1.500" />
    <path d="M17 17l5 3-5 3z" fill="#000" />
  </>
);
const raiseIcons: ReactNode[] = [
  <>
    <path d="M3 3h17v3H3zM3 8h13v2H3zM17 6h3v9h-3z" fill="#000" />
    {dottedArrow}
  </>,
  <>
    <path d="M3 4h9c6 0 8 4 8 11" fill="none" stroke="#000" strokeWidth="1.700" />
    <path d="M3 8h8c4 0 5 3 5 7" fill="none" stroke="#000" strokeWidth="1" />
    {dottedArrow}
  </>,
  <>
    <path d="M3 3h17v2H3z" fill="#000" />
    <path d="M3 6h14v7H3z" fill="#7fa7cf" />
    <path d="M17 5h3v10h-3z" fill="#000" />
    {dottedArrow}
  </>,
  <>
    <path d="M3 4h17M3 10h17" stroke="#000" strokeWidth="3" strokeDasharray="3 1.500" />
    <path d="M6 3v9M11.500 3v9M17 3v9" stroke="#000" strokeWidth="1" />
    {dottedArrow}
  </>,
];

function TopBar() {
  return (
    <div className="h-[41px] flex items-center shrink-0">
      <div className="w-[121px] shrink-0 flex pl-[11px] gap-[15px]">
        <Icon>{selAll}</Icon>
        <Icon>{selLayers}</Icon>
        <Icon>{selTouch}</Icon>
      </div>
      <div className="w-px h-[34px] bg-[#dedddb] shrink-0" />
      <div className="w-[162px] shrink-0 flex pl-[12px] gap-[15px]">
        <Icon>{rot('M14 21v-9c0-3-3-4-6-3v3L3 8l5-5v3c6-1 10 1 10 6v9z')}</Icon>
        <Icon>{rot('M10 21v-9c0-3 3-4 6-3v3l5-4-5-5v3C10 5 6 7 6 12v9z')}</Icon>
        <Icon>{rot('M2 12l6-6v3h8V6l6 6-6 6v-3H8v3z')}</Icon>
        <Icon>{rot('M12 2l6 6h-3v8h3l-6 6-6-6h3V8H6z')}</Icon>
      </div>
      <div className="w-px h-[34px] bg-[#dedddb] shrink-0" />
      <div className="w-[161px] shrink-0 flex pl-[14px] gap-[15px]">
        <Icon>{alignIcon('M3 21h18v-3H3zM13 4h8M13 8h8M13 12h8M7 3v12M4 12l3 3 3-3')}</Icon>
        <Icon>{alignIcon('M3 18h18v3H3zM13 4h8M13 8h8M13 12h8M3 8h7M7 5l3 3-3 3')}</Icon>
        <Icon>{alignIcon('M3 4h12M3 8h12M3 12h8M3 16h8M14 14h7M18 11l3 3-3 3')}</Icon>
        <Icon>{alignIcon('M3 3h18v3H3zM3 9h8M3 13h8M3 17h8M16 21V9M13 12l3-3 3 3')}</Icon>
      </div>
      <div className="w-px h-[34px] bg-[#dedddb] shrink-0" />
      <span className="ml-[9px] w-[14px] text-[12px] text-[#a8a8a8]">X:</span>
      <Spin w="w-[114px]" value="-25,431" />
      <span className="ml-[8px] w-[13px] text-[12px] text-[#a8a8a8]">Y:</span>
      <Spin w="w-[115px]" value="30,408" />
      <span className="ml-[9px] w-[11px] text-[12px] text-[#a8a8a8]">Š:</span>
      <Spin w="w-[112px]" value="235,964" />
      <div className="w-[44px] flex justify-center">
        <Icon s={19}>
          <path d="M8 11V6a4 4 0 018 0v1" fill="none" stroke="#000" strokeWidth="1.800" />
          <rect x="5" y="11" width="14" height="11" rx="1" fill="#f7e27a" stroke="#000" />
          <rect x="11" y="15" width="2" height="4" fill="#333" />
        </Icon>
      </div>
      <span className="w-[13px] text-[12px] text-[#a8a8a8]">V:</span>
      <Spin w="w-[112px]" value="241,508" />
      <div className="ml-[4px] w-[60px] h-[34px] shrink-0 rounded-[5px] border border-[#cdc7c2] bg-[#faf9f8] flex items-center justify-center gap-[5px]">
        <span className="text-[12px] text-[#a8a8a8]">mm</span>
        <svg width="9" height="5" viewBox="0 0 9 5">
          <path d="M0 0h9L4.500 5z" fill="#a8a8a8" />
        </svg>
      </div>
      <div className="ml-[8px] w-px h-[34px] bg-[#dedddb] shrink-0" />
      <div className="ml-[6px] flex gap-px">
        {raiseIcons.map((ic, i) => (
          <div key={i} className="w-[36px] h-[34px] rounded-[5px] bg-[#d3d0cc] flex items-center justify-center">
            <Icon s={20}>{ic}</Icon>
          </div>
        ))}
      </div>
    </div>
  );
}

function Status() {
  return (
    <div className="h-[34px] flex items-center shrink-0">
      <div className="w-[47px] pl-[2px] text-[12px] leading-[17px] text-[#3b3f41] shrink-0">
        <div className="flex justify-between pr-[2px]">
          <span>Výplň:</span>
          <span>–</span>
        </div>
        <div className="flex justify-between pr-[2px]">
          <span>Tah:</span>
          <span>–</span>
        </div>
      </div>
      <span className="w-[12px] text-[12px] text-[#3b3f41] mt-[4px]">P:</span>
      <Spin w="w-[67px]" value="100" />
      <div className="ml-[65px] w-px h-full bg-[#dedddb] shrink-0" />
      <div className="w-[72px] flex justify-between pl-[10px] pr-[9px] shrink-0">
        <Icon s={18}>
          <path d="M1 13c5-8 17-8 22 0-5 7-17 7-22 0z" fill="#fff" stroke="#000" strokeWidth="1.500" />
          <circle cx="12" cy="13" r="5" fill="#222" />
          <path d="M5 8L3 3M9 6L8 1M15 6l1-5M19 8l2-5" stroke="#000" strokeWidth="1.500" />
        </Icon>
        <Icon s={18}>
          <path d="M8 11V6a4 4 0 018 0v1" fill="none" stroke="#000" strokeWidth="1.800" />
          <rect x="5" y="11" width="14" height="11" rx="1" fill="#f7e27a" stroke="#000" />
          <rect x="11" y="15" width="2" height="4" fill="#333" />
        </Icon>
      </div>
      <div className="w-[82px] h-full shrink-0 rounded-[5px] border border-[#cdc7c2] bg-[#f6f5f4] flex items-center justify-center gap-[6px]">
        <span className="text-[10px] text-[#a0a0a0]">•Vrstva 1</span>
        <svg width="9" height="5" viewBox="0 0 9 5">
          <path d="M0 0h9L4.500 5z" fill="#a0a0a0" />
        </svg>
      </div>
      <span className="ml-[2px] w-[1234px] shrink-0 text-[12px] tracking-[0.16px] text-[#2e3436] whitespace-nowrap">
        Nejsou vybrány žádné objekty. Kliknutím, Shiftem + kliknutím, Altem + skrolováním nebo tažením myší kolem objektů je vyberete.
      </span>
      <div className="w-px h-full bg-[#dedddb] shrink-0" />
      <div className="w-[84px] pl-[10px] pr-[10px] text-[13px] leading-[17px] text-[#2e3436] shrink-0">
        <div className="flex justify-between">
          <span>X:</span>
          <span>150,43</span>
        </div>
        <div className="flex justify-between">
          <span>Y:</span>
          <span>164,42</span>
        </div>
      </div>
      <span className="w-[17px] text-[13px] text-[#2e3436] shrink-0">L:</span>
      <Spin w="w-[93px]" value="70%" dim={false} big />
      <span className="ml-[12px] w-[19px] text-[13px] text-[#2e3436] shrink-0">Č:</span>
      <Spin w="w-[100px]" value="0,00°" dim={false} big />
    </div>
  );
}

export default function App() {
  return (
    <div className={`w-[1920px] h-[1017px] overflow-hidden bg-[#f6f5f4] flex flex-col ${FONT}`}>
      <div className="h-[24px] shrink-0 flex items-center border-b border-[#dfdcd9] pl-px">
        {menus.map((m) => (
          <span key={m} className="px-[7.600px] text-[12px] text-[#2e3436]">
            {m}
          </span>
        ))}
      </div>
      <TopBar />
      <div className="h-[884px] shrink-0 flex">
        <LeftToolbox />
        <div className="w-[1319px] shrink-0 flex flex-col">
          <div className="h-[19px] flex">
            <div className="w-[20px] pl-[3px] pt-px">
              <Icon s={16}>
                <rect x="1" y="1" width="22" height="22" rx="3" fill="#eee" stroke="#ccc" />
                <path d="M8 11V8a4 4 0 018 0v3" fill="none" stroke="#222" strokeWidth="2" />
                <rect x="5" y="11" width="14" height="10" rx="1" fill="#f2b820" stroke="#222" />
              </Icon>
            </div>
            <HRuler />
            <div className="flex-1 pt-[1px] pl-[2px]">
              <div className="w-[16px] h-[16px] rounded-[3px] border border-[#bdb9b4] bg-white flex items-center justify-center text-[9px] leading-none text-[#888]">
                1
              </div>
            </div>
          </div>
          <div className="h-[848px] flex">
            <VRuler />
            <EuropeCanvas />
            <div className="flex-1 bg-[#eeedec] pl-[6px] pt-[271px]">
              <div className="w-[6px] h-[316px] rounded-full bg-[#7e8283]" />
            </div>
          </div>
          <div className="flex-1 flex">
            <div className="w-[20px]" />
            <div className="w-[1280px] bg-[#eeedec] pl-[243px] pt-[5px]">
              <div className="w-[905px] h-[6px] rounded-full bg-[#7e8283]" />
            </div>
            <div className="flex-1 rounded-[3px] border border-[#d5d2ce] flex items-center justify-center">
              <svg width="12" height="14" viewBox="0 0 12 14">
                <defs>
                  <linearGradient id="cmG" x1="0" y1="0" x2="1" y2="1">
                    <stop offset="0" stopColor="#a8dfa8" />
                    <stop offset="1" stopColor="#d6c6f0" />
                  </linearGradient>
                </defs>
                <path d="M2 1l9 12H1z" fill="url(#cmG)" />
              </svg>
            </div>
          </div>
        </div>
        <DockPanel />
        <CommandBar />
        <SnapBar />
      </div>
      <div className="h-[21px] shrink-0 flex">
        <div className="w-[1884px] flex overflow-hidden">
          <svg width="19" height="21" viewBox="0 0 19 21" className="shrink-0">
            <rect width="19" height="21" fill="#fff" />
            <path d="M0 0l19 21M19 0L0 21" stroke="#7a1212" strokeWidth="1.800" />
          </svg>
          {swatches.map((c, i) => (
            <div key={i} className="w-[19px] h-full shrink-0" style={{ backgroundColor: c }} />
          ))}
        </div>
        <div className="flex-1 flex items-end justify-center">
          <svg width="6" height="10" viewBox="0 0 6 10" className="translate-y-[6px]">
            <path d="M6 0L0 5l6 5z" fill="#222" />
          </svg>
        </div>
      </div>
      <div className="h-[13px] shrink-0 w-[1884px] bg-[#eeedec] border-t border-[#d8d6d3] pl-[3px] pt-[3px]">
        <div className="w-[426px] h-[6px] rounded-full bg-[#7e8283]" />
      </div>
      <Status />
    </div>
  );
}
